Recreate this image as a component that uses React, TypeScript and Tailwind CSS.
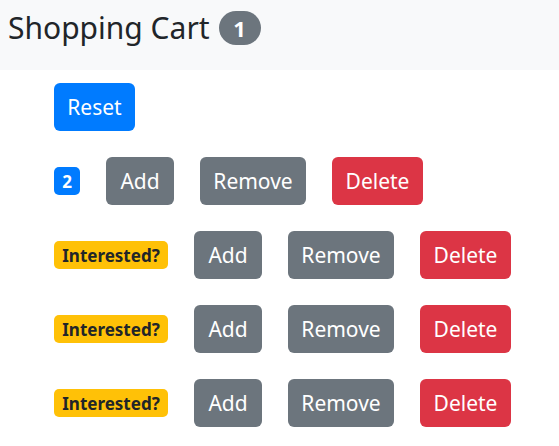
import React from 'react';

const font = { fontFamily: '"Noto Sans", "Open Sans", sans-serif' };

const Btn = ({ label, color, w }: { label: string; color: string; w: string }) => (
  <button className={`${color} ${w} h-12 rounded-md text-[21px] text-white leading-none flex items-center justify-center`}>
    {label}
  </button>
);

const Row = ({ badge }: { badge: React.ReactNode }) => (
  <div className="flex items-center gap-[26px]">
    {badge}
    <Btn label="Add" color="bg-[#6c757d]" w="w-[68px]" />
    <Btn label="Remove" color="bg-[#6c757d]" w="w-[106px]" />
    <Btn label="Delete" color="bg-[#dc3545]" w="w-[91px]" />
  </div>
);

const Interested = () => (
  <span className="w-[114px] h-[28px] rounded-[5px] bg-[#ffc107] text-[#212529] font-bold text-[17px] leading-none flex items-center justify-center">
    Interested?
  </span>
);

export default function App() {
  return (
    <div style={font} className="w-[559px] h-[446px] bg-white text-[#212529]">
      <div className="h-[70px] bg-[#f8f9fa] pl-2 pt-[11px]">
        <div className="flex items-center gap-[9px]">
          <h1 className="text-[30px] leading-none font-normal">Shopping Cart</h1>
          <span className="w-[42px] h-[34px] rounded-full bg-[#6c757d] text-white font-bold text-[22px] leading-none flex items-center justify-center">
            1
          </span>
        </div>
      </div>
      <div className="pl-[54px] pt-[13px] flex flex-col gap-[26px]">
        <div className="flex">
          <Btn label="Reset" color="bg-[#007bff]" w="w-[81px]" />
        </div>
        <Row
          badge={
            <span className="w-[26px] h-[28px] rounded-[5px] bg-[#007bff] text-white font-bold text-[17px] leading-none flex items-center justify-center">
              2
            </span>
          }
        />
        <Row badge={<Interested />} />
        <Row badge={<Interested />} />
        <Row badge={<Interested />} />
      </div>
    </div>
  );
}
